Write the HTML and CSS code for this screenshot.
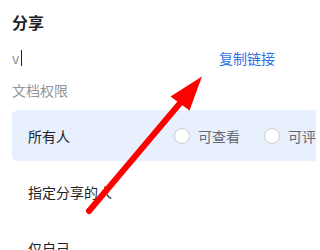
FILE: index.html
```html
<!DOCTYPE html>
<html lang="zh">
<head>
<meta charset="utf-8">
<link rel="stylesheet" href="styles.css">
</head>
<body>
<div class="panel">
  <div class="title">分享</div>
  <div class="input-row">
    <div class="input">v<span class="caret"></span></div>
    <a class="copy">复制链接</a>
  </div>
  <div class="label">文档权限</div>
  <div class="options">
    <div class="opt active">
      <span class="opt-name">所有人</span>
      <div class="radios">
        <span class="radio"><span class="dot"></span>可查看</span>
        <span class="radio"><span class="dot"></span>可评论</span>
      </div>
    </div>
    <div class="opt"><span class="opt-name">指定分享的人</span></div>
    <div class="opt"><span class="opt-name">仅自己</span></div>
  </div>
</div>
<svg class="arrow" width="316" height="250" viewBox="0 0 316 250">
  <line x1="89" y1="211" x2="181" y2="102" stroke="#ff0000" stroke-width="6" stroke-linecap="round"/>
  <polygon points="202,76.5 170.5,96.5 189.5,110.5" fill="#ff0000"/>
</svg>
</body>
</html>
```
FILE: styles.css
```css
html, body {
  margin: 0;
  padding: 0;
  background: #ffffff;
  overflow: hidden;
}
body {
  width: 316px;
  height: 250px;
  font-family: "Noto Sans CJK SC", "Noto Sans", sans-serif;
  position: relative;
}
.panel {
  padding: 12px 0 0 12px;
}
.title {
  font-size: 16px;
  font-weight: 700;
  color: #1f2329;
  line-height: 20px;
  height: 20px;
}
.input-row {
  display: flex;
  align-items: center;
  justify-content: space-between;
  margin-top: 16px;
  height: 20px;
  width: 263px;
}
.input {
  font-size: 14px;
  color: #8f959e;
  display: flex;
  align-items: center;
  line-height: 20px;
}
.caret {
  display: inline-block;
  width: 1px;
  height: 16px;
  background: #1f2329;
  margin-left: 2px;
}
.copy {
  font-size: 14px;
  color: #2f6fe6;
  line-height: 20px;
}
.label {
  margin-top: 12px;
  font-size: 14px;
  color: #8f959e;
  line-height: 20px;
}
.options {
  margin-top: 10px;
  display: flex;
  flex-direction: column;
  gap: 5px;
}
.opt {
  height: 51px;
  display: flex;
  align-items: center;
  padding-left: 16px;
  border-radius: 6px 0 0 6px;
  font-size: 14px;
  color: #1f2329;
}
.opt.active {
  background: #e8effd;
}
.opt-name {
  width: 146px;
  flex-shrink: 0;
}
.radios {
  display: flex;
  gap: 24px;
  white-space: nowrap;
  flex-shrink: 0;
}
.radio {
  display: flex;
  align-items: center;
  gap: 8px;
  color: #646a73;
}
.dot {
  width: 14px;
  height: 14px;
  border: 1px solid #c9cdd4;
  border-radius: 50%;
  background: #ffffff;
}
.arrow {
  position: absolute;
  left: 0;
  top: 0;
}
```
